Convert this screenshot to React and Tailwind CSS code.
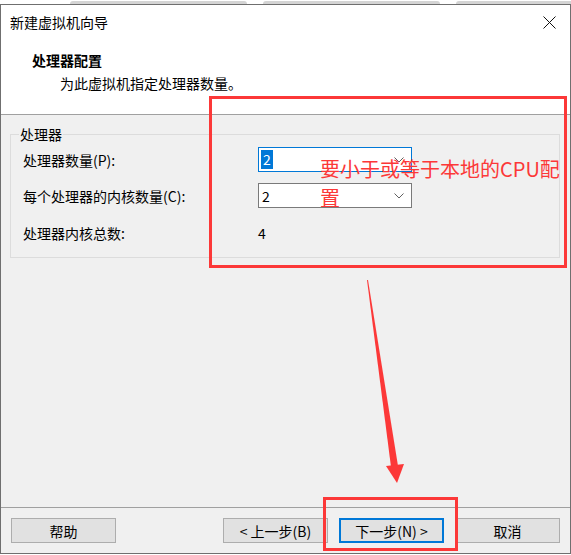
import React from "react";

function Chevron() {
  return (
    <svg width="10" height="6" viewBox="0 0 10 6" className="text-[#606060]">
      <path d="M0.5 0.5 L5 5 L9.5 0.5" fill="none" stroke="currentColor" strokeWidth="1" />
    </svg>
  );
}

function Button({ children, primary }) {
  return (
    <button
      className={
        primary
          ? "w-[105px] h-[25px] bg-[#e1e1e1] border-2 border-[#0078d7] text-[14px] leading-none text-black"
          : "w-[105px] h-[25px] bg-[#e1e1e1] border border-[#adadad] text-[14px] leading-none text-black"
      }
    >
      {children}
    </button>
  );
}

export default function App() {
  return (
    <div className="relative w-[571px] h-[555px] bg-white overflow-hidden font-['Noto_Sans_CJK_SC',sans-serif] text-black">
      {/* 背后窗口的标签条 */}
      <div className="flex h-[4px] gap-[16px] pl-[70px]">
        <div className="w-[177px] h-[3px] mt-[1px] bg-[#d4d4d4] rounded-t-[3px]" />
        <div className="w-[177px] h-[3px] mt-[1px] bg-[#d4d4d4] rounded-t-[3px]" />
        <div className="flex-1 h-[3px] mt-[1px] bg-[#d4d4d4] rounded-tl-[3px]" />
      </div>

      {/* 对话框 */}
      <div className="flex flex-col h-[550px] border border-[#6f6f6f] bg-[#f0f0f0]">
        {/* 标题 + 页眉 */}
        <div className="h-[109px] bg-white flex flex-col">
          <div className="h-[34px] flex items-center justify-between pl-[9px] pr-[14px]">
            <span className="text-[14px] leading-[20px]">新建虚拟机向导</span>
            <svg width="13" height="13" viewBox="0 0 13 13">
              <path d="M0.5 0.5 L12.5 12.5 M12.5 0.5 L0.5 12.5" stroke="#111" strokeWidth="1" />
            </svg>
          </div>
          <div className="pl-[31px] pt-[11px] text-[14px] leading-[20px] font-bold">处理器配置</div>
          <div className="pl-[59px] mt-[3px] text-[14px] leading-[20px]">为此虚拟机指定处理器数量。</div>
        </div>
        <div className="h-px bg-[#a0a0a0]" />

        {/* 主体 */}
        <div className="flex-1 pt-[9px] pl-[9px] pr-[10px]">
          <fieldset className="border border-[#dcdcdc] pt-[3px] pb-[14px]">
            <legend className="ml-[8px] px-[1px] text-[14px] leading-[20px]">处理器</legend>
            <div className="grid grid-cols-[235px_154px] items-center pl-[12px] text-[14px] leading-[20px]">
              <span>处理器数量(P):</span>
              <div className="h-[25px] bg-white border border-[#0078d7] flex items-center justify-between pl-[2px] pr-[7px]">
                <span className="bg-[#0078d7] text-white px-[2px] leading-[19px]">2</span>
                <Chevron />
              </div>
              <span className="mt-[11px]">每个处理器的内核数量(C):</span>
              <div className="mt-[11px] h-[25px] bg-white border border-[#7a7a7a] flex items-center justify-between pl-[3px] pr-[7px]">
                <span>2</span>
                <Chevron />
              </div>
              <span className="mt-[15px]">处理器内核总数:</span>
              <span className="mt-[15px]">4</span>
            </div>
          </fieldset>
        </div>

        <div className="h-px bg-[#a0a0a0]" />
        {/* 底部按钮 */}
        <div className="h-[45px] flex items-center justify-between px-[10px]">
          <Button>帮助</Button>
          <div className="flex gap-[11px]">
            <Button>&lt; 上一步(B)</Button>
            <Button primary>下一步(N) &gt;</Button>
            <Button>取消</Button>
          </div>
        </div>
      </div>

      {/* 标注 */}
      <div className="absolute left-[209px] top-[96px] w-[358px] h-[172px] border-[3px] border-[#fc3838]" />
      <div className="absolute left-[320px] top-[154px] text-[20px] leading-[29px] text-[#fc3838]">
        要小于或等于本地的CPU配
        <br />置
      </div>
      <svg className="absolute left-[360px] top-[276px]" width="50" height="212" viewBox="0 0 50 212">
        <polygon points="7,4 8,4 38,190 31,191" fill="#fc3838" />
        <polygon points="26,190 44,188 37,207" fill="#fc3838" />
      </svg>
      <div className="absolute left-[323px] top-[497px] w-[135px] h-[54px] border-[3px] border-[#fc3838]" />
    </div>
  );
}
